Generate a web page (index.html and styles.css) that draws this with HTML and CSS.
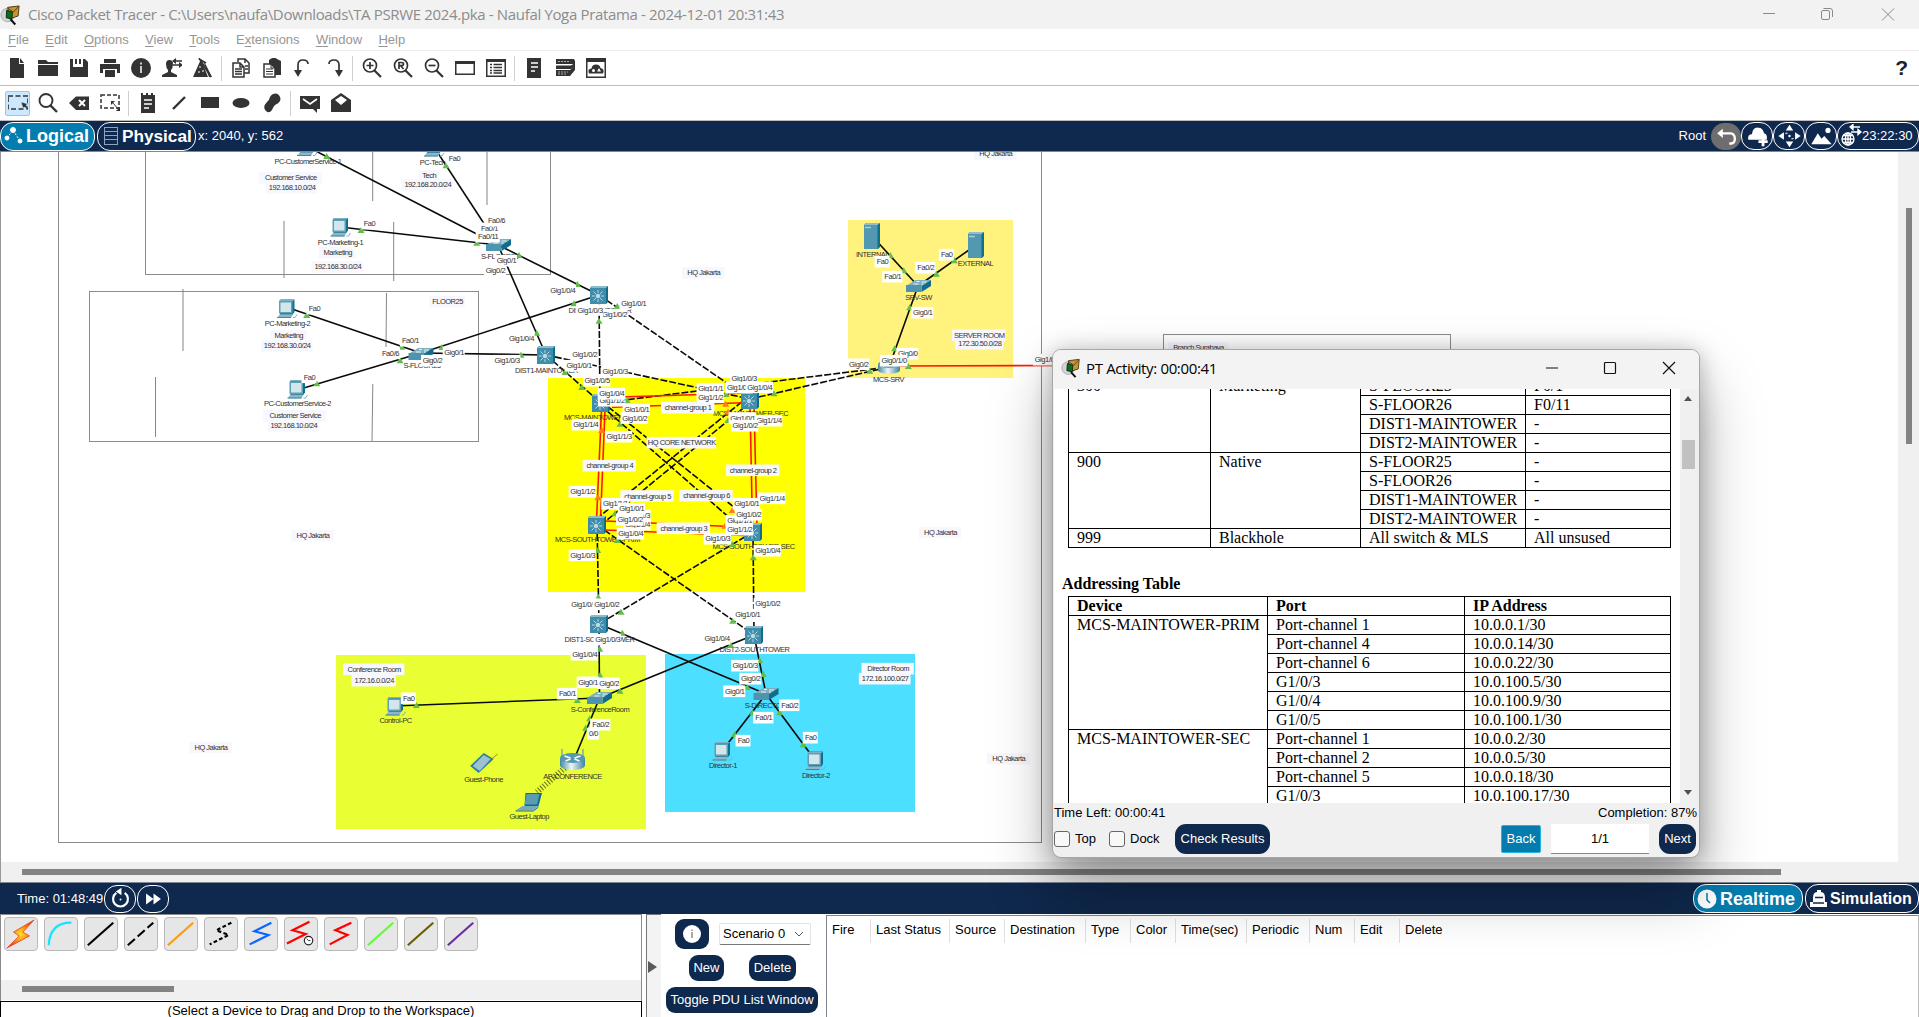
FILE: index.html
```html
<!DOCTYPE html>
<html lang="en">
<head>
<meta charset="utf-8">
<title>Cisco Packet Tracer</title>
<link rel="stylesheet" href="styles.css">
</head>
<body>
<svg class="defs" width="0" height="0">
  <defs>
    <symbol id="app" viewBox="0 0 22 22">
      <circle cx="8" cy="11" r="7" fill="#d5d5d5" stroke="#aaa"/>
      <path d="M8 3 20 1.500 19 12 10 15Z" fill="#c8952d" stroke="#46391a"/>
      <path d="M8.500 4 14 8 19.500 2" fill="none" stroke="#5b3f10"/>
      <path d="M7 6 13 8 12.500 15 6.500 14Z" fill="#0b6b22" stroke="#072f12"/>
      <path d="M11 15.500 16 21" stroke="#111" stroke-width="2.200"/>
    </symbol>
    <linearGradient id="metal"><stop offset="0" stop-color="#3f87a1"/><stop offset=".45" stop-color="#eef6f8"/><stop offset="1" stop-color="#3a84a0"/></linearGradient>
    <radialGradient id="fire"><stop offset="0" stop-color="#ffe21f"/><stop offset="1" stop-color="#f5480f"/></radialGradient>
    <g id="pc">
      <path d="M-7-8-6-9.500H7.500V3L6 5H-7Z" fill="#0f7190"/><path d="M-8-8-7-9.500H7.500L6-8Z" fill="#7db0c2"/><path d="M-8-8H5.500V4.500H-8Z" fill="#5f9fb6"/>
      <path d="M-6.500-6.500H4V3H-6.500Z" fill="#d3e6ec"/><path d="M-7 5H6L4 9H-10Z" fill="#8db7c8"/>
      <path d="M-10 8.500H4M-7 5H6" stroke="#2c7c98" stroke-width=".8"/><path d="M6 8.500 8 8.500 10 5.500" fill="none" stroke="#7fb0c2"/>
    </g>
    <g id="mls">
      <path d="M-9-7-7-9H9V7L7 9H-9Z" fill="#0f6c8b"/><path d="M-9-7-7-9H9L7-7Z" fill="#8abccb"/>
      <path d="M-9-7H7V9H-9Z" fill="#3f8dab"/>
      <path d="M-1-5V7M-7 1H5M-5.500-3.500 3.500 5.500M3.500-3.500-5.500 5.500" stroke="#dcedf2" stroke-width=".8"/>
      <circle cx="-1" cy="1" r="2.800" fill="#b9dbe5" stroke="#3f8dab"/>
    </g>
    <g id="sw">
      <path d="M-12.500 0-3-6H12.500L3 0Z" fill="#7eaec0"/><path d="M3 0 12.500-6V0L3 6Z" fill="#0f6c8b"/>
      <path d="M-12.500-1H3V6H-12.500Z" fill="#4c94b0"/>
      <path d="M-5-2H0M3-4H8M-2-4.500H1M3-2H5" stroke="#e6f3f6"/>
    </g>
    <g id="server">
      <path d="M-8-11-6-13H8V11L6 13H-8Z" fill="#0f6f8e"/><path d="M-8-11H5.500V13H-8Z" fill="#5298b1"/>
      <path d="M-8-11-6-13H8L5.500-11Z" fill="#91bfce"/><path d="M-7-8.500H-1" stroke="#a9cddb" stroke-width="1.500"/>
    </g>
    <g id="router">
      <path d="M-11-3V3C-11 8 11 8 11 3V-3Z" fill="url(#metal)"/><ellipse cy="-3" rx="11" ry="4" fill="#68a4b9"/>
      <path d="M-6-5 6-1M6-5-6-1" stroke="#fff" stroke-width="1.200"/>
    </g>
    <g id="ap">
      <path d="M-10.500-3V-12M10.500-3V-12" stroke="#71a9bd" stroke-width="1.400"/>
      <path d="M-12.500-3V4C-12.500 10.500 12.500 10.500 12.500 4V-3Z" fill="url(#metal)"/><ellipse cy="-3" rx="12.500" ry="5" fill="#5599b1"/>
      <path d="M-8-5-2-3M8-5 2-3M-7 0-2-2M7 0 2-2" stroke="#fff" stroke-width="1.500"/>
    </g>
    <g id="phone">
      <path d="M-11.500 3 2-10 12-4-3 10Z" fill="#2d7f9c"/><path d="M-9 3 2-8 9-4-2 8Z" fill="#9cc1cf"/><path d="M10-4 16-9" stroke="#8b8f20"/>
    </g>
    <g id="laptop">
      <path d="M-4-9H12.500L9 4H-5Z" fill="#0f6c8b"/><path d="M-3-8H10L7.500 2.500H-5Z" fill="#5a9cb4"/>
      <path d="M-7 4H9L4 8.500H-14Z" fill="#76a9bd"/><path d="M-14 9H4L9 5" fill="none" stroke="#266f8b"/>
    </g>
  </defs>
</svg>

<header class="titlebar">
  <svg class="app-icon"><use href="#app"/></svg>
  <span class="app-title">Cisco Packet Tracer - C:\Users\naufa\Downloads\TA PSRWE 2024.pka - Naufal Yoga Pratama - 2024-12-01 20:31:43</span>
  <svg class="winctl" width="150" height="29" fill="none" stroke="#8a8a8a"><path d="M0 13.500H12M119 8.500 131 20.500M131 8.500 119 20.500"/><rect x="58.500" y="10.500" width="8" height="9" rx="1.500"/><path d="M60.500 8.500H67Q69.500 8.500 69.500 11V17"/></svg>
</header>
<nav class="menu"><a><u>F</u>ile</a><a><u>E</u>dit</a><a><u>O</u>ptions</a><a><u>V</u>iew</a><a><u>T</u>ools</a><a>E<u>x</u>tensions</a><a><u>W</u>indow</a><a><u>H</u>elp</a></nav>

<div class="toolbar">
  <i><svg viewBox="0 0 20 20"><path d="M3 0H12V6H17V20H3ZM13 0 17 5H13Z"/></svg></i>
  <i><svg viewBox="0 0 20 20"><path d="M0 2H8L10 4H20V6H0ZM0 7H20V18H0Z"/></svg></i>
  <i><svg viewBox="0 0 20 20"><path fill-rule="evenodd" d="M1 1H4V9H14V1H16L19 4V19H1ZM10 1H12V6H10ZM6 1H8V6H6Z"/></svg></i>
  <i><svg viewBox="0 0 20 20"><path d="M4 1H16V5H4ZM0 6H20V15H17V11H3V15H0ZM5 12H15V19H5Z"/></svg></i>
  <i><svg viewBox="0 0 20 20"><circle cx="10" cy="10" r="10"/><path d="M10 8V15M10 4.500V6.500" stroke="#ddd" stroke-width="1.800"/></svg></i>
  <i><svg viewBox="0 0 20 20"><path d="M4 6Q4 2 7.500 2T11 6Q11 10 9 12V14L15 17V19H0V17L6 14V12Q4 10 4 6Z"/><path d="M12 3H20M11 7H19" stroke="#333" stroke-width="1.500"/><path d="M14 0V6L10 3ZM17 4V10L21 7Z"/></svg></i>
  <i><svg viewBox="0 0 20 20"><path d="M8 1 0 19H15ZM10 3 13 7 19 19H16Z"/><path d="M6 0 18 19M13 5 6 1" stroke="#333" stroke-width="1.600"/><path d="M6 9H8M5 14H7M9 13H11" stroke="#fff"/></svg></i>
  <b></b>
  <i><svg viewBox="0 0 20 20" fill="none" stroke="#333" stroke-width="1.500"><path d="M7 4V1H14L18 5V15H13"/><path fill="#fff" d="M2 5H9L13 9V19H2ZM9 5V9H13M4 11H11M4 13.500H11M4 16H11M14 5V1M14 8H17M14 11H17"/></svg></i>
  <i><svg viewBox="0 0 20 20"><path d="M7 2Q12-2 15 1L19 3V17H7Z"/><path d="M2 6H9L13 10V19H2Z" fill="#fff" stroke="#333" stroke-width="1.500"/><path d="M4 11H11M4 13.500H11M4 16H11M9 6V10H13" stroke="#333" fill="none"/></svg></i>
  <i><svg viewBox="0 0 20 20"><path d="M5 14V7Q5 2 10 2T15 6" fill="none" stroke="#333" stroke-width="1.700"/><path d="M1 12H9L5 19Z"/></svg></i>
  <i><svg viewBox="0 0 20 20"><path d="M15 14V7Q15 2 10 2T5 6" fill="none" stroke="#333" stroke-width="1.700"/><path d="M11 12H19L15 19Z"/></svg></i>
  <b></b>
  <i><svg viewBox="0 0 20 20" fill="none" stroke="#333" stroke-width="1.700"><circle cx="8" cy="7.500" r="6.500"/><path d="M12.500 12.500 19 19" stroke-width="2.200"/><path d="M4.500 7.500H11.500M8 4V11"/></svg></i>
  <i><svg viewBox="0 0 20 20" fill="none" stroke="#333" stroke-width="1.700"><circle cx="8" cy="7.500" r="6.500"/><path d="M12.500 12.500 19 19" stroke-width="2.200"/><path d="M6 11V4.500H8.500Q10.500 4.500 10.500 6T8.500 7.700H6M8 8 10.500 11"/></svg></i>
  <i><svg viewBox="0 0 20 20" fill="none" stroke="#333" stroke-width="1.700"><circle cx="8" cy="7.500" r="6.500"/><path d="M12.500 12.500 19 19" stroke-width="2.200"/><path d="M4.500 7.500H11.500"/></svg></i>
  <i><svg viewBox="0 0 20 20"><path d="M0 3H20V17H0Z" /><path d="M1.500 6H18.500V15.500H1.500Z" fill="#fff"/></svg></i>
  <i><svg viewBox="0 0 20 20"><path d="M0 1H20V19H0Z"/><path d="M1.500 4H18.500V17.500H1.500Z" fill="#fff"/><path d="M4 6.500H6M7.500 6.500H16M4 9.500H6M7.500 9.500H16M4 12.500H6M7.500 12.500H16M4 15H6M7.500 15H16" stroke="#333" stroke-width="1.500"/></svg></i>
  <b></b>
  <i><svg viewBox="0 0 20 20"><path d="M3 0H17V20H3Z"/><path d="M7 5H14M7 9H14M7 13H11" stroke="#fff" stroke-width="1.500"/></svg></i>
  <i><svg viewBox="0 0 20 20"><path d="M1 1H19L20 3V6H1ZM1 7.500H16L20 5V8L16 11H1ZM1 12H15L20 8V12L15 18H1Z"/><path d="M3 3.500H14M3 14H13M3 16H12" stroke="#aaa" stroke-dasharray="2 1"/></svg></i>
  <i><svg viewBox="0 0 20 20"><path d="M0 0H20V20H0Z"/><path d="M1.500 4H18.500V18.500H1.500Z" fill="#fff"/><path d="M3 15.500Q1 11 5.500 10.500Q6 6.500 10 6.500T14.500 10Q19 11 17 15.500Z"/><circle cx="7.500" cy="12.500" r="1.500" fill="#fff"/><path d="M11 13.500 13 10 15 13.500Z" fill="#fff"/></svg></i>
  <strong class="help">?</strong>
</div>

<div class="toolbar">
  <i class="active"><svg viewBox="0 0 20 20"><path d="M0 3H20V16H0Z" fill="none" stroke="#333" stroke-width="1.700" stroke-dasharray="5 2.500"/><path d="M13 9 20 11 18 12 21 16 19 17 17 14 15 15Z" stroke="#cce8ff" stroke-width=".5"/></svg></i>
  <i><svg viewBox="0 0 20 20" fill="none" stroke="#333" stroke-width="1.900"><circle cx="8" cy="7.500" r="6.500"/><path d="M12.500 12.500 19 19" stroke-width="2.400"/></svg></i>
  <i><svg viewBox="0 0 20 20"><path d="M7 3.500H20V17H7L0 10Z"/><path d="M10 7 16 13M16 7 10 13" stroke="#fff" stroke-width="2"/></svg></i>
  <i><svg viewBox="0 0 20 20"><path d="M1 2H19V15H1Z" fill="none" stroke="#333" stroke-width="1.500" stroke-dasharray="4 2"/><path d="M12 9 20 18" stroke="#333"/><path d="M11 8H15L11 12ZM20 18V14L16 18Z"/></svg></i>
  <b></b>
  <i><svg viewBox="0 0 20 20"><path d="M3 0H5V2H8V0H10V2H13V0H15V2H17V20H3Z"/><path d="M6 7H14M6 11H14M6 15H11" stroke="#fff" stroke-width="1.300"/></svg></i>
  <i><svg viewBox="0 0 20 20"><path d="M4 16 16 4" stroke="#333" stroke-width="2.400"/></svg></i>
  <i><svg viewBox="0 0 20 20"><path d="M1 4H19V15H1Z"/></svg></i>
  <i><svg viewBox="0 0 20 20"><ellipse cx="10" cy="10" rx="8.500" ry="5"/></svg></i>
  <i><svg viewBox="0 0 20 20"><path d="M11 1Q16-1 18 4T13 12Q11 14 10 17Q7 21 4 18Q0 14 5 9Q7 8 8 4Q9 2 11 1Z"/></svg></i>
  <b></b>
  <i><svg viewBox="0 0 20 20"><path d="M0 3H20V16H17V20L13 16H0Z"/><path d="M3 6 10 11 17 6" fill="none" stroke="#fff" stroke-width="1.600"/></svg></i>
  <i><svg viewBox="0 0 20 20"><path d="M0 7 10 0 20 7V19H0Z"/><path d="M4 7 10 3 16 7 10 12Z" fill="#fff"/></svg></i>
</div>

<div class="bar top">
  <button class="tab on"><svg width="21" height="20" fill="#fff" stroke="#fff"><path d="M4 12 10 4 17 15" fill="none" stroke-width="1" stroke-dasharray="2 1.500"/><circle cx="10" cy="4" r="2.500"/><circle cx="4" cy="12" r="2"/><circle cx="17" cy="15" r="2"/></svg><span>Logical</span></button>
  <button class="tab physical"><svg width="16" height="20" fill="none" stroke="#8ea1bd"><path d="M1.500 1V19M14.500 1V19M2 1.500H14M2 5.500H14M2 9.500H14M2 13.500H14M2 18.500H14"/></svg><span>Physical</span></button>
  <span class="coords">x: 2040, y: 562</span>
  <span class="root">Root</span>
  <div class="round grey"><svg viewBox="0 0 30 28"><path d="M9 10H20Q24 11 24 16T20 21H18" fill="none" stroke="#fff" stroke-width="2.500"/><path d="M5 10 11 5V15Z" fill="#fff"/></svg></div>
  <div class="round"><svg viewBox="0 0 30 28" fill="#fff"><path d="M5 18Q4 12 9 12Q10 4 16 5Q21 5 22 11Q26 12 25 18Z"/><path d="M21 15V25M16 20H26" stroke="#fff" stroke-width="3"/></svg></div>
  <div class="round"><svg viewBox="0 0 30 28" fill="#fff"><path d="M15 2 19 8H11ZM15 26 11 20H19ZM3 14 9 10V18ZM27 14 21 18V10Z"/><circle cx="15" cy="14" r="1.300"/><path d="M11 12V11H13M17 17H19V16" stroke="#fff" fill="none"/></svg></div>
  <div class="round"><svg viewBox="0 0 30 28" fill="#fff"><path d="M4 23 11 11 15 17 18 14 26 23Z"/><circle cx="22" cy="8" r="2.800"/></svg></div>
  <div class="clock"><svg width="22" height="24" fill="none" stroke="#fff" stroke-width="1.300"><circle cx="8" cy="15" r="6"/><ellipse cx="8" cy="15" rx="2.500" ry="6"/><path d="M2 15H14M3 11.500H13M3 18.500H13M8 9V21M11 3H20M11 8H20"/><path d="M10 3 13 .5V5.500ZM21 8 18 5.500V10.500Z" fill="#fff"/></svg><span>23:22:30</span></div>
</div>

<main class="workspace">
  <svg id="canvas" viewBox="1 152 1897 710" width="1897" height="710"></svg>
  <div class="vscroll"><div></div></div>
  <div class="hscroll"><div></div></div>
</main>

<div class="bar bottom">
  <span class="time">Time: 01:48:49</span>
  <div class="round"><svg viewBox="0 0 30 28" fill="none" stroke="#fff" stroke-width="2.300"><path d="M10.500 7.500A8 8 0 1 0 19.500 7.500"/><path d="M16 2V10L10 6Z" fill="#fff" stroke="none"/><circle cx="15" cy="14.500" r="1" fill="#fff" stroke="none"/></svg></div>
  <div class="round"><svg viewBox="0 0 30 28" fill="#fff"><path d="M7 8 15 14 7 20ZM15 8 23 14 15 20Z"/></svg></div>
  <button class="tab on realtime"><svg width="20" height="20"><circle cx="10" cy="10" r="9.500" fill="#fff"/><path d="M10 4V11L13 14" fill="none" stroke="#047cae" stroke-width="1.500"/></svg><span>Realtime</span></button>
  <button class="tab simulation"><svg width="20" height="20" fill="#fff"><path d="M4 9Q4 3 8 3V1H12V3Q16 3 16 9V13H18V18H1V13H4Z"/><path d="M6 8.500H14M4 14H15" stroke="#0e274c" stroke-width="1.500"/></svg><span>Simulation</span></button>
</div>

<footer class="dock">
  <section class="devices">
    <div class="palette">
      <i><svg viewBox="0 0 34 34"><path d="M31 2 9 15 15 19 2 32 26 19 19 15Z" fill="url(#fire)" stroke="#e22b12" stroke-width=".7"/></svg></i>
      <i><svg viewBox="0 0 34 34"><path d="M4 29Q5 5 28 5" stroke="#12e5ff"/></svg></i>
      <i><svg viewBox="0 0 34 34"><path d="M3 29 30 5" stroke="#000"/></svg></i>
      <i><svg viewBox="0 0 34 34"><path d="M3 29 30 5" stroke="#000" stroke-dasharray="10 4"/></svg></i>
      <i><svg viewBox="0 0 34 34"><path d="M3 29 30 5" stroke="#ff9a0a"/></svg></i>
      <i><svg viewBox="0 0 34 34"><path d="M28 5 12 13 25 18 5 28" stroke="#000" stroke-dasharray="4 2.500"/></svg></i>
      <i><svg viewBox="0 0 34 34"><path d="M28 5 10 14 25 18 5 28" stroke="#0a66ff"/></svg></i>
      <i><svg viewBox="0 0 34 34"><path d="M26 4 8 13 22 17 2 27" stroke="#f00"/><circle cx="25" cy="24" r="4.500" stroke="#222" stroke-width="1.200" fill="#fff"/><path d="M23 22 25 24H27" stroke="#222" stroke-width="1"/></svg></i>
      <i><svg viewBox="0 0 34 34"><path d="M28 5 11 13 24 18 5 28" stroke="#f00"/></svg></i>
      <i><svg viewBox="0 0 34 34"><path d="M3 29 30 5" stroke="#5cff30"/></svg></i>
      <i><svg viewBox="0 0 34 34"><path d="M3 29 30 5" stroke="#666000"/></svg></i>
      <i><svg viewBox="0 0 34 34"><path d="M3 29 30 5" stroke="#6a2ea8"/></svg></i>
    </div>
    <div class="pscroll"><div></div></div>
    <div class="hint">(Select a Device to Drag and Drop to the Workspace)</div>
  </section>
  <div class="splitter"><svg width="9" height="12"><path d="M0 0 9 6 0 12Z" fill="#5a5a5a"/></svg></div>
  <section class="scenario">
    <div class="row first"><button class="btn info"><svg width="18" height="18"><circle cx="9" cy="9" r="9" fill="#fff"/><path d="M9 7V13M9 4.500V6" stroke="#555"/></svg></button><div class="combo">Scenario 0<svg width="10" height="6"><path d="M1 1 5 5 9 1" fill="none" stroke="#555"/></svg></div></div>
    <div class="row second"><button class="btn">New</button><button class="btn">Delete</button></div>
    <button class="btn toggle">Toggle PDU List Window</button>
  </section>
  <section class="pdu">
    <span>Fire</span><span>Last Status</span><span>Source</span><span>Destination</span><span>Type</span><span>Color</span><span>Time(sec)</span><span>Periodic</span><span>Num</span><span>Edit</span><span>Delete</span>
  </section>
</footer>

<div class="activity">
  <div class="act-title"><svg class="act-icon"><use href="#app"/></svg><span>PT Activity: 00:00:41</span>
    <svg class="act-ctl" width="130" height="16" fill="none" stroke="#111" stroke-width="1.200"><path d="M0 8H12M117 2 129 14M129 2 117 14"/><rect x="58.500" y="2.500" width="11" height="11" rx="1"/></svg>
  </div>
  <div class="act-body">
    <div class="doc">
      <table class="vlan">
        <colgroup><col class="v1"><col class="v2"><col class="v3"><col class="v4"></colgroup>
        <tr><td rowspan="4">300</td><td rowspan="4">Marketing</td><td>S-FLOOR25</td><td>F0/1</td></tr>
        <tr><td>S-FLOOR26</td><td>F0/11</td></tr>
        <tr><td>DIST1-MAINTOWER</td><td>-</td></tr>
        <tr><td>DIST2-MAINTOWER</td><td>-</td></tr>
        <tr><td rowspan="4">900</td><td rowspan="4">Native</td><td>S-FLOOR25</td><td>-</td></tr>
        <tr><td>S-FLOOR26</td><td>-</td></tr>
        <tr><td>DIST1-MAINTOWER</td><td>-</td></tr>
        <tr><td>DIST2-MAINTOWER</td><td>-</td></tr>
        <tr><td>999</td><td>Blackhole</td><td>All switch &amp; MLS</td><td>All unsused</td></tr>
      </table>
      <h2>Addressing Table</h2>
      <table>
        <colgroup><col class="a1"><col class="a2"><col class="a3"></colgroup>
        <tr><th>Device</th><th>Port</th><th>IP Address</th></tr>
        <tr><td rowspan="6">MCS-MAINTOWER-PRIM</td><td>Port-channel 1</td><td>10.0.0.1/30</td></tr>
        <tr><td>Port-channel 4</td><td>10.0.0.14/30</td></tr>
        <tr><td>Port-channel 6</td><td>10.0.0.22/30</td></tr>
        <tr><td>G1/0/3</td><td>10.0.100.5/30</td></tr>
        <tr><td>G1/0/4</td><td>10.0.100.9/30</td></tr>
        <tr><td>G1/0/5</td><td>10.0.100.1/30</td></tr>
        <tr><td rowspan="4">MCS-MAINTOWER-SEC</td><td>Port-channel 1</td><td>10.0.0.2/30</td></tr>
        <tr><td>Port-channel 2</td><td>10.0.0.5/30</td></tr>
        <tr><td>Port-channel 5</td><td>10.0.0.18/30</td></tr>
        <tr><td>G1/0/3</td><td>10.0.100.17/30</td></tr>
      </table>
    </div>
    <div class="act-scroll"><svg width="8" height="5"><path d="M0 5 4 0 8 5Z" fill="#505050"/></svg><div></div><svg width="8" height="5"><path d="M0 0 4 5 8 0Z" fill="#505050"/></svg></div>
  </div>
  <div class="act-status"><span>Time Left: 00:00:41</span><span>Completion: 87%</span></div>
  <div class="act-foot"><span class="check"></span><span class="cl">Top</span><span class="check"></span><span class="cl dk">Dock</span><button class="btn">Check Results</button><button class="btn back">Back</button><div class="page">1/1</div><button class="btn next">Next</button></div>
</div>
<script src="topology.js"></script>
</body>
</html>
```
FILE: styles.css
```css
* { box-sizing: border-box; }
body { margin: 0; width: 1919px; height: 1017px; overflow: hidden; background: #fff; position: relative; font: 13px/16px "Liberation Sans", Arial, sans-serif; color: #000; display: flex; flex-direction: column; }
svg { display: block; flex: none; }
.defs { position: absolute; }
button { font: inherit; color: #fff; padding: 0; border: 0; white-space: nowrap; }

.titlebar { height: 29px; background: #f2f2f2; display: flex; align-items: center; flex: none; }
.app-icon { width: 21px; height: 22px; }
.app-title { margin-left: 7px; font: 15px/20px "Open Sans", "Noto Sans", sans-serif; letter-spacing: -.34px; color: #8c8c8c; white-space: nowrap; padding-bottom: 1px; }
.winctl { margin-left: auto; margin-right: 6px; }

.menu { height: 22px; flex: none; border-bottom: 1px solid #ececec; display: flex; align-items: center; color: #969696; padding: 1px 0 0 8px; }
.menu a { margin-right: 16.3px; }
.menu u { text-underline-offset: 2px; }

.toolbar { height: 35px; flex: none; border-bottom: 1px solid #bdbdbd; display: flex; align-items: center; padding-left: 1px; }
.toolbar i { width: 31px; height: 26px; display: grid; place-items: center; }
.toolbar svg { width: 20px; height: 20px; fill: #333; }
.toolbar svg[fill="none"] { fill: none; }
.toolbar b { width: 1px; height: 25px; background: #cfcfcf; margin: 0 3px; }
.toolbar .active { width: 25px; height: 25px; margin: 0 2px 0 4px; background: #cce8ff; border: 1px solid #90c8f6; border-radius: 2px; }
.help { margin-left: auto; margin-right: 11px; font-size: 21px; color: #222; }

.bar { height: 31px; flex: none; background: #0f284d; color: #fff; display: flex; align-items: center; border-bottom: 1px solid #7f8794; }
.tab { height: 29px; border: 1px solid #fff; border-radius: 13px; background: #0f284d; font-weight: bold; font-size: 18px; display: flex; align-items: center; }
.tab.on { background: #047cae; width: 95px; padding-left: 2px; }
.tab.on span { margin-left: 2px; }
.physical { width: 99px; margin-left: 2px; padding-left: 5px; }
.physical span { margin-left: 3px; font-size: 17.2px; }
.coords { margin-left: 2px; }
.root { margin-left: auto; margin-right: 5px; }
.round { width: 32px; height: 28px; border: 1px solid #fff; border-radius: 13px; margin-right: 0; display: grid; place-items: center; }
.round svg { width: 29px; height: 26px; }
.round.grey { background: #6e6e6e; border-color: #6e6e6e; width: 30px; height: 27px; }
.clock { width: 82px; height: 28px; border: 1px solid #fff; border-radius: 13px; display: flex; align-items: center; padding-left: 2px; }
.bar.bottom { height: 32px; border-top: 1px solid #7f8794; border-bottom: 0; }
.bar.bottom .round { margin-right: 1px; }
.time { margin-left: 17px; margin-right: 1px; }
.tab.realtime { width: 110px; margin-left: auto; margin-right: 2px; padding-left: 3px; }
.tab.realtime span { margin-left: 3px; }
.simulation { width: 114px; padding-left: 3px; font-size: 16px; }
.simulation span { margin-left: 1px; }

.workspace { height: 730px; flex: none; display: grid; grid-template: 710px 20px / 1897px 21px; border-left: 1px solid #999; }
.vscroll, .hscroll { background: #f0f0f0; }
.vscroll { display: flex; justify-content: center; padding-top: 56px; }
.vscroll div { width: 6px; height: 236px; background: #838383; }
.hscroll { grid-column: 1 / 3; padding: 7px 0 0 21px; }
.hscroll div { width: 1759px; height: 6px; background: #838383; }
.lab { font-family: "Liberation Sans", Arial, sans-serif; font-size: 7.500px; letter-spacing: -.5px; text-anchor: middle; fill: #303030; }
.port { letter-spacing: -.4px; }

.dock { height: 103px; display: flex; }
.devices { width: 642px; border: 1px solid #8a8a8a; border-bottom: 0; }
.palette { height: 65px; padding: 2px 0 0 3px; display: flex; gap: 6px; }
.palette i { width: 34px; height: 34px; border: 1px solid #b9b9b9; border-radius: 4px; background: #e6e6e6; display: block; }
.palette svg { width: 32px; height: 32px; fill: none; stroke-width: 2.300; }
.pscroll { height: 20px; background: #f0f0f0; padding: 6px 0 0 21px; }
.pscroll div { width: 152px; height: 6px; background: #838383; }
.hint { border: 1px solid #000; border-bottom: 0; height: 18px; text-align: center; padding-top: 2px; margin: 1px -1px 0; line-height: 14px; white-space: nowrap; }
.splitter { width: 15px; margin-left: 4px; border-left: 1px solid #777; border-top: 1px solid #777; background: #f3f3f3; padding: 46px 0 0 1px; }
.scenario { width: 165px; padding: 5px 0 0 5px; }
.row { display: flex; align-items: center; }
.first { padding-left: 9px; gap: 10px; height: 30px; }
.second { padding-left: 23px; gap: 25px; margin: 6px 0; }
.btn { background: #0f284d; border-radius: 9px; height: 26px; width: 47px; }
.second .btn:first-child { width: 35px; }
.info { width: 34px; height: 30px; display: grid; place-items: center; }
.combo { width: 92px; height: 22px; border: 1px solid #e4e4e4; border-bottom-color: #777; border-radius: 2px; display: flex; align-items: center; justify-content: space-between; padding: 0 6px 0 3px; }
.toggle { width: 152px; }
.pdu { flex: 1; margin-top: 1px; border: 1px solid #7d8490; border-right-color: #bbb; border-bottom: 0; padding-top: 3px; display: grid; grid-template-columns: 44px 79px 55px 81px 45px 45px 71px 63px 45px 45px 1fr; align-items: start; }
.pdu span { padding: 3px 0 5px 5px; border-right: 1px solid #e0e0e0; }
.pdu span:last-child { border: 0; }

.activity { position: absolute; left: 1052px; top: 349px; width: 648px; height: 509px; border: 1px solid #a6a6a6; border-radius: 9px; background: #f0f0f0; overflow: clip; box-shadow: 0 32px 60px rgba(0,0,0,.34), 0 2px 22px rgba(0,0,0,.25); }
.act-title { height: 39px; background: #f3f3f3; display: flex; align-items: center; padding: 0 23px 4px 8px; font: 15px/20px "Open Sans", "Noto Sans", sans-serif; }
.act-title span { margin-left: 5px; letter-spacing: -.35px; }
.act-icon { width: 20px; height: 20px; }
.act-ctl { margin-left: auto; }
.act-body { height: 414px; display: flex; padding-left: 1px; }
.doc { width: 626px; height: 414px; overflow: hidden; background: #fff; font: 16px/18px "Liberation Serif", "Times New Roman", serif; }
.doc table { width: 602px; margin-left: 14px; border-collapse: collapse; table-layout: fixed; }
.doc .vlan { margin-top: -13px; }
.doc td, .doc th { border: 1px solid #000; padding: 0 0 0 8px; height: 19px; line-height: 18px; text-align: left; vertical-align: top; white-space: nowrap; }
.v1 { width: 142px; } .v2 { width: 150px; } .v3 { width: 165px; } .v4 { width: 145px; }
.a1 { width: 199px; } .a2 { width: 197px; } .a3 { width: 206px; }
.doc h2 { font-size: 16px; line-height: 18px; margin: 27px 0 3px 8px; }
.act-scroll { width: 19px; display: flex; flex-direction: column; align-items: center; padding: 7px 3px 8px 0; }
.act-scroll div { width: 13px; height: 29px; background: #c1c1c1; margin: 39px 0 auto; flex: none; }
.act-status { display: flex; justify-content: space-between; padding: 2px 2px 0 1px; height: 20px; }
.act-foot { display: flex; align-items: center; height: 32px; padding: 0 3px 0 1px; }
.check { width: 16px; height: 16px; border: 1px solid #666; border-radius: 3px; background: #f8f8f8; }
.cl { margin-left: 5px; width: 34px; }
.dk { width: 45px; }
.act-foot .btn { width: 95px; height: 30px; border-radius: 11px; }
.act-foot .back { width: 40px; height: 28px; background: #047cae; margin-left: auto; border: 1px solid #24b4e4; outline: 1px solid #047cae; outline-offset: -3px; border-radius: 2px; }
.page { width: 98px; height: 30px; margin: 0 10px; background: #fff; border-bottom: 1px solid #888; text-align: center; line-height: 30px; }
.act-foot .next { width: 37px; }
```
FILE: topology.js
```js
const out = [];
const lines = (list, attrs) => list.forEach(([a, b, c, d]) => out.push(`<path d="M${a} ${b}L${c} ${d}" ${attrs}/>`));
const rect = (x, y, x2, y2, attrs) => out.push(`<rect x="${x}" y="${y}" width="${x2 - x}" height="${y2 - y}" ${attrs}/>`);

// Rooms and floor outlines
const outline = 'fill="none" stroke="#8c8c8c"';
rect(58.5, 100, 1041.5, 842.5, outline);
rect(145.5, 100, 550.5, 274.5, outline);
rect(89.5, 291.5, 478.5, 441.5, outline);
rect(1163.5, 334.5, 1450.5, 400, outline);
rect(548, 378, 805, 592, 'fill="#ffff00"');
rect(336, 655, 646, 829, 'fill="#e9ff33"');
rect(665, 654, 915, 812, 'fill="#4ddfff"');
rect(848, 220, 1013, 378, 'fill="#fff27d"');
lines([[372.7, 152, 372.7, 201], [487, 152, 487, 205], [284, 221, 284, 278], [393.7, 222, 393.7, 281], [183, 289, 183, 351],
  [386.5, 293, 386, 347], [155.5, 377, 155.5, 437], [372.8, 384, 372, 442]], 'stroke="#858585"');

// Copper straight-through links
lines([[306, 146, 498, 245], [434, 147, 498, 245], [340, 227, 498, 245], [498, 245, 599, 295], [498, 245, 546, 355],
  [286, 307, 421, 353], [297, 390, 421, 353], [421, 353, 599, 295], [421, 353, 546, 355], [599, 624, 599.5, 698],
  [599, 624, 766, 694], [754, 635, 599.5, 698], [754, 635, 766, 694], [599.5, 698, 394, 706], [599.5, 698, 573, 762],
  [766, 694, 722, 751], [766, 694, 815, 760], [872, 236, 918, 286], [976, 245, 918, 286], [918, 286, 889, 367]],
  'stroke="#0a0a0a" stroke-width="1.6"');
// Crossover links
lines([[599, 295, 600, 403], [599, 295, 750, 399], [546, 355, 601, 403], [546, 355, 750, 399], [601, 403, 889, 367],
  [750, 399, 889, 367], [608, 406.7, 745, 516], [608, 411.7, 740, 527], [742, 401.7, 600, 516], [745, 406.7, 601, 525],
  [597, 525, 599, 624], [597, 525, 754, 635], [753, 532, 599, 624], [753, 532, 754, 635]],
  'stroke="#0a0a0a" stroke-width="1.6" stroke-dasharray="7 2"');
// Fibre and trunk links
lines([[612, 397.2, 750, 393], [612, 407.2, 750, 402.5], [601.5, 410, 596.5, 520], [605, 410, 600.5, 520], [750, 405, 752.5, 527],
  [754, 405, 757, 527], [605, 521, 753, 527.5], [605, 530, 750, 535.7], [895, 366, 1060, 365.5]], 'stroke="#ff1800" stroke-width="1.6"');
// Wireless association
lines([[567, 766, 537, 792]], 'stroke="#5e6620" stroke-width="6" stroke-dasharray="1 2"');

const nodes = {
  pc: [[307, 147], [434, 147.5], [340.5, 227.5], [287, 309], [297.5, 389.5], [395.5, 706.5], [722.5, 751.5], [815.5, 761]],
  mls: [[546, 355], [599, 295], [601, 403], [750, 400], [597, 525], [753, 532], [599, 624], [754, 635]],
  sw: [[498.5, 245], [421, 354], [599.5, 698], [766, 694], [918.5, 286]],
  server: [[872, 236], [976, 245]], router: [[889, 367]], ap: [[572.5, 761]], phone: [[481.7, 763]], laptop: [[529.5, 802]]
};
for (const kind in nodes) nodes[kind].forEach(([x, y]) => out.push(`<use href="#${kind}" x="${x}" y="${y}"/>`));

const width = s => [...s].reduce((w, c) => w + ('il/.- 1'.includes(c) ? (c === '1' ? 3.7 : 1.7) : /[A-Z]/.test(c) ? 4.7 : c === 'm' ? 5.7 : 3.6), 0);
const text = (s, x, y, cls = 'lab') => out.push(`<text class="${cls}" x="${x + .5}" y="${y + 2.7}">${s}</text>`);
const boxed = (s, x, y, fill, pad, cls) => {
  const w = width(s) + pad;
  rect(x - w / 2, y - 5.8, x + w / 2, y + 5.8, `fill="${fill}"`);
  text(s, x, y, cls);
};

// Device names
[['PC-CustomerService-1', 307.5, 161.5], ['PC-Tech', 432, 162.5], ['PC-Marketing-1', 340, 242.5], ['PC-Marketing-2', 287, 323.5],
  ['PC-CustomerService-2', 297, 403.7], ['S-FLOOR26', 499, 256.7], ['S-FLOOR25', 421.5, 365.5], ['DIST1-MAINTOWER', 546, 370.5],
  ['DIST2-MAINTOWER', 599.5, 310.5], ['MCS-MAINTOWER-PRIM', 602.5, 417.5], ['MCS-MAINTOWER-SEC', 750, 413.5],
  ['MCS-SOUTHTOWER-PRIM', 597, 539.7], ['MCS-SOUTHTOWER-SEC', 753, 546.7], ['DIST1-SOUTHTOWER', 599, 639],
  ['DIST2-SOUTHTOWER', 754, 649.6], ['S-ConferenceRoom', 599.5, 709.5], ['S-DIRECTOR', 765, 705.6], ['Control-PC', 395, 720.5],
  ['Guest-Phone', 483, 779.5], ['Guest-Laptop', 528.7, 816.7], ['AP-CONFERENCE', 572, 776.7], ['Director-1', 722.5, 765.5],
  ['Director-2', 815.5, 775.7], ['INTERNAL', 872, 254.5], ['EXTERNAL', 975, 263.5], ['SRV-SW', 918, 297.5], ['MCS-SRV', 888, 379.5]]
  .forEach(n => text(...n));

// Link status markers
const marks = (list, fill) => list.forEach(([x, y]) => out.push(`<path d="M${x} ${y - 3}l3.500 6h-7z" fill="${fill}"/>`));
marks([[326.7, 156], [446, 165.3], [361, 230], [476.7, 242.7], [519, 255], [306.7, 315], [401.7, 346.7], [400, 360.3], [316.7, 383.3],
  [442, 347], [536.7, 332.7], [521, 354.7], [577.3, 284], [574, 303.3], [599, 320.7], [617.3, 306], [581.7, 387], [565, 372],
  [620, 423.7], [774, 393.3], [627, 400], [726, 394], [728, 420], [615, 513.3], [597.7, 550], [753.3, 557.3], [617.3, 540],
  [732.3, 544], [598.3, 596.7], [621, 611.7], [622.3, 632.7], [599.7, 648.7], [600, 675], [620, 690.7], [577.3, 700], [416.3, 705],
  [589.7, 718.3], [585.7, 727.7], [732.7, 620.7], [730.7, 644.7], [759.7, 660], [763.3, 674], [747.3, 687], [752.7, 712.3],
  [734.7, 734], [779.7, 712.3], [803.3, 744.3], [890.3, 255], [903.7, 270.3], [954.3, 260.3], [936.3, 273.7], [909.7, 307.3],
  [894.7, 348.3], [908.3, 366], [869.7, 370.7]], '#63bd49');
marks([[601.7, 430], [725.7, 403.7], [598, 497.3], [728, 411.7], [732.3, 510], [725, 525.7]], '#ff7a1a');

// Canvas notes
[['HQ Jakarta', 995.3, 153.7], ['HQ Jakarta', 703.3, 272.7], ['HQ Jakarta', 312.5, 535.5], ['HQ Jakarta', 210.5, 747.5],
  ['HQ Jakarta', 940, 532.5], ['HQ Jakarta', 1008.3, 758.7], ['Customer Service', 290.3, 177.7], ['192.168.10.0/24', 291.7, 187.7],
  ['Tech', 428.7, 175.7], ['192.168.20.0/24', 427.3, 184.7], ['Marketing', 337.3, 252.7], ['192.168.30.0/24', 337.3, 266.7],
  ['FLOOR25', 447, 301.7], ['Marketing', 288.3, 335.7], ['192.168.30.0/24', 286.7, 345.7], ['Customer Service', 294.7, 415.7],
  ['192.168.10.0/24', 293.3, 425.7], ['channel-group 1', 687.7, 407.7], ['HQ CORE NETWORK', 681.3, 442.7],
  ['channel-group 4', 609.3, 465.7], ['channel-group 2', 752.7, 470.3], ['channel-group 5', 647, 496], ['channel-group 6', 706, 495.7],
  ['channel-group 3', 683.3, 528.3], ['Conference Room', 373.7, 669.3], ['172.16.0.0/24', 373.7, 680.7],
  ['Director Room', 887.7, 668.7], ['172.16.100.0/27', 884.7, 678.7], ['SERVER ROOM', 978.7, 335.3], ['172.30.50.0/28', 979.3, 343.7],
  ['Branch Surabaya', 1198, 347.7]].forEach(n => boxed(...n, '#f7f7fe', 5));

// Port labels
[['Fa0', 454, 158.7], ['Fa0/1', 489, 228.3], ['Fa0/6', 496, 220.7], ['Fa0/11', 487.7, 236.7], ['Fa0', 369, 223.7],
  ['Gig0/1', 506, 260.7], ['Gig0/2', 495, 270.3], ['Fa0', 314, 308.7], ['Fa0/1', 410, 340.7], ['Fa0/6', 390, 353.3],
  ['Gig0/1', 453.7, 352.7], ['Gig0/2', 432, 360.7], ['Fa0', 309, 377.3], ['Gig1/0/4', 521, 338.7], ['Gig1/0/3', 506.7, 360.7],
  ['Gig1/0/4', 562.3, 290.7], ['Gig1/0/1', 633.3, 303.7], ['Gig1/0/2', 614, 314.7], ['Gig1/0/3', 589.7, 310], ['Gig1/0/2', 584.3, 354.7],
  ['Gig1/0/1', 578.7, 365.7], ['Gig1/0/3', 614.7, 371.7], ['Gig1/0/5', 596.7, 380.7], ['Gig1/1/2', 611.7, 400.7],
  ['Gig1/0/4', 611.3, 393.7], ['Gig1/0/1', 636.3, 409.7], ['Gig1/0/2', 634.3, 418], ['Gig1/1/4', 585.3, 424.7],
  ['Gig1/1/3', 618.7, 436.7], ['Gig1/1/1', 710.3, 388.7], ['Gig1/1/2', 710.3, 397.3], ['Gig1/0/3', 743.7, 378.7],
  ['Gig1/0/2', 739, 387.7], ['Gig1/0/4', 759.3, 387.3], ['Gig1/0/1', 742.3, 418], ['Gig1/1/4', 768.7, 420.7], ['Gig1/0/2', 744.7, 425.7],
  ['Gig1/1/2', 582.3, 491.7], ['Gig1/1/1', 615, 503.7], ['Gig1/1/4', 637, 524.7], ['Gig1/1/3', 637, 515.7], ['Gig1/0/1', 631.3, 508.7],
  ['Gig1/0/2', 629.7, 519.7], ['Gig1/0/4', 630.3, 533.7], ['Gig1/1/4', 771.7, 498.3], ['Gig1/0/1', 746.3, 503.7],
  ['Gig1/1/1', 739.3, 520.7], ['Gig1/0/2', 748.3, 514.7], ['Gig1/1/2', 739.3, 529.7], ['Gig1/0/3', 717.3, 538.7],
  ['Gig1/0/4', 767.3, 550.7], ['Gig1/0/3', 582.3, 555.3], ['Gig1/0/1', 583.3, 604.3], ['Gig1/0/2', 606.3, 604.3],
  ['Gig1/0/2', 767.3, 603.7], ['Gig1/0/3', 607.3, 639.7], ['Gig1/0/4', 584.3, 654.7], ['Gig0/1', 587.7, 682.3],
  ['Gig0/2', 608.7, 683.3], ['Fa0/1', 567, 693.7], ['Fa0', 408.3, 698.3], ['Fa0/2', 600.3, 724.7], ['0/0', 593, 733.7],
  ['Gig1/0/1', 747.3, 614.7], ['Gig1/0/4', 716.7, 638.7], ['Gig1/0/3', 744.7, 665.7], ['Gig0/2', 750.3, 678.7],
  ['Gig0/1', 734.3, 691.3], ['Fa0/2', 789.3, 705.3], ['Fa0/1', 763.3, 717.7], ['Fa0', 743, 740.7], ['Fa0', 810.3, 737.7],
  ['Fa0', 882, 261.7], ['Fa0/1', 892.3, 276.7], ['Fa0', 946.3, 254.7], ['Fa0/2', 925.3, 267.7], ['Gig0/1', 922.3, 312.7],
  ['Gig0/0', 907.3, 353.7], ['Gig0/1/0', 893.7, 360.7], ['Gig0/2', 858.3, 364.3], ['Gig1/0', 1044, 359.7]]
  .forEach(n => boxed(...n, '#fff', 3, 'lab port'));

document.getElementById('canvas').innerHTML = out.join('');
```
